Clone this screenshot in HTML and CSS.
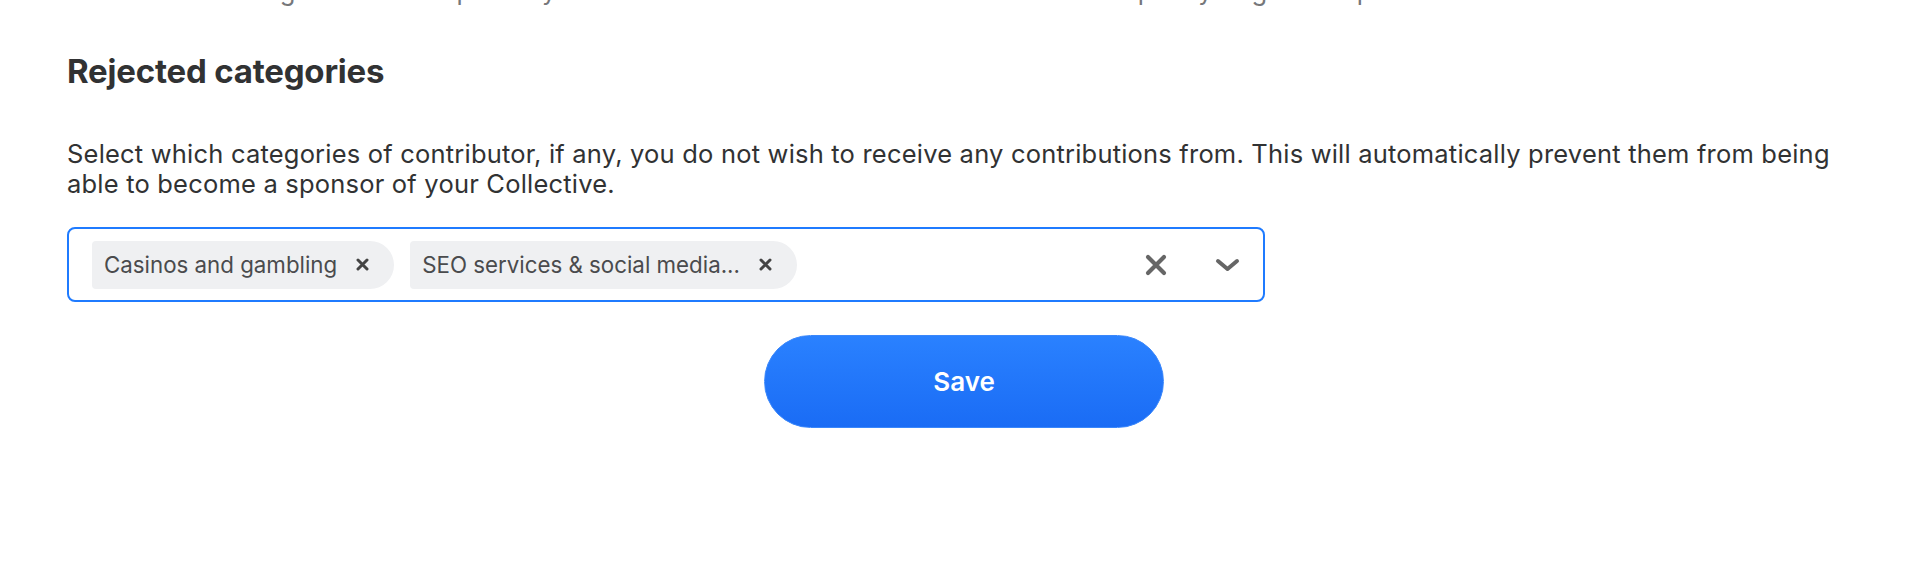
FILE: index.html
```html
<!DOCTYPE html>
<html lang="en">
<head>
<meta charset="utf-8">
<title>Rejected categories</title>
<link rel="stylesheet" href="styles.css">
</head>
<body>
<main class="page">
  <p class="prev-help">This is where the gift is not accepted. By other donations that are made later will then be plenty of good help for the team.</p>
  <section class="section">
    <h3 class="section-title">Rejected categories</h3>
    <p class="section-desc">Select which categories of contributor, if any, you do not wish to receive any contributions from. This will automatically prevent them from being able to become a sponsor of your Collective.</p>
    <div class="select">
      <div class="select-values">
        <span class="chip"><span class="chip-label">Casinos and gambling</span><span class="chip-remove"><svg width="13" height="13" viewBox="0 0 13 13"><path d="M2 2 L11 11 M11 2 L2 11" stroke="#444" stroke-width="3" stroke-linecap="round"/></svg></span></span>
        <span class="chip"><span class="chip-label">SEO services &amp; social media...</span><span class="chip-remove"><svg width="13" height="13" viewBox="0 0 13 13"><path d="M2 2 L11 11 M11 2 L2 11" stroke="#444" stroke-width="3" stroke-linecap="round"/></svg></span></span>
      </div>
      <div class="select-indicators">
        <span class="indicator clear"><svg width="22" height="22" viewBox="0 0 22 22"><path d="M3 3 L19 19 M19 3 L3 19" stroke="#666" stroke-width="4.2" stroke-linecap="round"/></svg></span>
        <span class="indicator chevron"><svg width="25" height="14" viewBox="0 0 25 14"><path d="M3 3 L12.5 11 L22 3" fill="none" stroke="#666" stroke-width="4" stroke-linecap="round" stroke-linejoin="round"/></svg></span>
      </div>
    </div>
    <div class="actions">
      <button class="save-btn" type="button">Save</button>
    </div>
  </section>
</main>
</body>
</html>
```
FILE: styles.css
```css
html, body {
  margin: 0;
  padding: 0;
  background: #ffffff;
}
body {
  font-family: Inter, "Noto Sans", sans-serif;
  color: #313233;
  overflow: hidden;
}
.page {
  padding: 0 45px 0 67px;
}
.prev-help {
  margin: -24px 0 0 0;
  font-size: 25.5px;
  line-height: 30px;
  color: #76777a;
  white-space: nowrap;
}
.section-title {
  margin: 45px 0 0 0;
  font-size: 33px;
  line-height: 40px;
  font-weight: 700;
  letter-spacing: -0.2px;
  color: #313233;
}
.section-desc {
  margin: 48px 0 0 0;
  font-size: 25.5px;
  line-height: 30px;
  letter-spacing: 0.2px;
  color: #313233;
}
.select {
  margin-top: 28px;
  width: 1198px;
  height: 75px;
  box-sizing: border-box;
  border: 2px solid #1f7bff;
  border-radius: 8px;
  display: flex;
  align-items: center;
  padding: 0 23px 0 23px;
}
.select-values {
  flex: 1;
  display: flex;
  align-items: center;
  gap: 16px;
}
.chip {
  display: flex;
  align-items: center;
  height: 48px;
  background: #eff0f2;
  border-radius: 4px 24px 24px 4px;
  color: #4a4b4d;
  font-size: 22.3px;
}
.chip-label {
  padding: 0 0 0 12px;
}
.chip-remove {
  display: flex;
  align-items: center;
  padding: 0 25px 0 19px;
}
.select-indicators {
  display: flex;
  align-items: center;
  gap: 48px;
}
.indicator {
  display: flex;
  align-items: center;
}
.actions {
  display: flex;
  justify-content: center;
  margin-top: 33px;
}
.save-btn {
  width: 400px;
  height: 93px;
  border-radius: 47px;
  border: 1px solid #3a87fb;
  background: linear-gradient(#2a81ff, #1a6cf5);
  color: #ffffff;
  font-family: Inter, "Noto Sans", sans-serif;
  font-size: 26px;
  font-weight: 600;
  cursor: pointer;
}
```
